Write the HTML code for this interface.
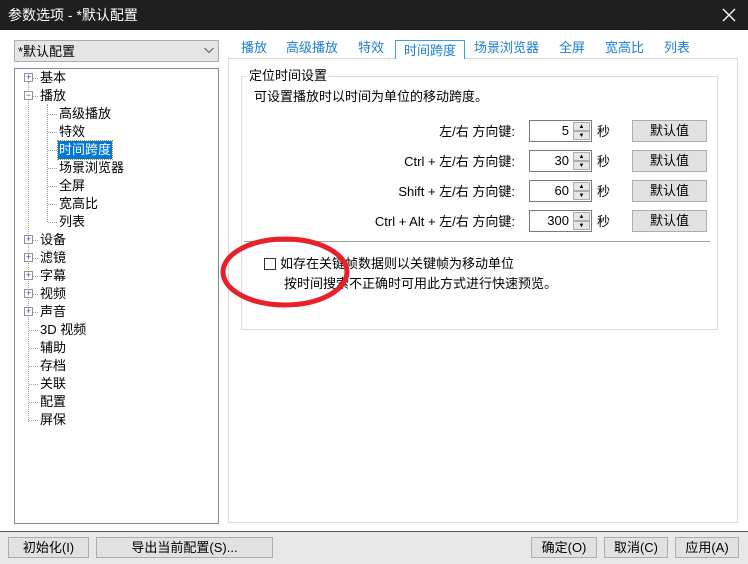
<!DOCTYPE html>
<html><head><meta charset="utf-8"><style>
*{margin:0;padding:0;box-sizing:border-box}
body{width:748px;height:564px;background:#fff;font-family:"Liberation Sans","Microsoft YaHei","Noto Sans CJK SC",sans-serif;font-size:13px;color:#000;position:relative;overflow:hidden}
.a{position:absolute;white-space:nowrap}
.title{left:0;top:0;width:748px;height:30px;background:#1f1f1f;color:#fff;font-size:14px;line-height:30px;padding-left:8px}
.tl{line-height:18px;height:18px}
.pm{position:absolute;width:9px;height:9px;border:1px solid #929292;background:#fff;font-size:9px;line-height:7px;text-align:center;color:#2a4ea3}
.tab{top:38px;height:20px;line-height:20px;color:#1a7fd6;font-size:13px}
.spin{width:63px;height:22px;border:1px solid #7a7a7a;background:#fff}
.spin span{position:absolute;right:22px;top:2px}
.arr{position:absolute;right:1px;width:17px;height:9px;border:1px solid #adadad;background:#e6e6e6;font-size:6px;line-height:8px;text-align:center}
.btn{width:75px;height:22px;border:1px solid #adadad;background:#e1e1e1;text-align:center;line-height:20px}
.bb{height:21px;border:1px solid #adadad;background:#e1e1e1;text-align:center;line-height:19px;top:537px}
</style></head><body>
<div class="a title">参数选项 - *默认配置</div>
<svg class="a" style="left:722px;top:8px" width="14" height="14"><path d="M1 1L13 13M13 1L1 13" stroke="#fff" stroke-width="1.3"/></svg>

<div class="a" style="left:14px;top:40px;width:205px;height:22px;background:#e5e5e5;border:1px solid #adadad;line-height:21px;padding-left:3px">*默认配置</div>
<svg class="a" style="left:204px;top:47px" width="10" height="7"><path d="M0.5 1L5 5.5L9.5 1" fill="none" stroke="#555" stroke-width="1"/></svg>

<div class="a" style="left:14px;top:68px;width:205px;height:456px;border:1px solid #828790;background:#fff"></div>
<div class="a" style="left:28px;top:82px;height:340px;border-left:1px dotted #a0a0a0"></div>
<div class="a" style="left:47px;top:104px;height:118px;border-left:1px dotted #a0a0a0"></div>
<div id="tree"></div>
<script>
var items=[["基本",0,"+"],["播放",0,"−"],["高级播放",1],["特效",1],["时间跨度",1,"sel"],["场景浏览器",1],["全屏",1],["宽高比",1],["列表",1],["设备",0,"+"],["滤镜",0,"+"],["字幕",0,"+"],["视频",0,"+"],["声音",0,"+"],["3D 视频",0],["辅助",0],["存档",0],["关联",0],["配置",0],["屏保",0]];
var h="";items.forEach(function(it,i){var y=69+i*18;var x=it[1]?59:40;var lx=it[1]?48:29;
h+='<div class="a" style="left:'+lx+'px;top:'+(y+9)+'px;width:'+(x-lx-2)+'px;border-top:1px dotted #a0a0a0"></div>';
if(it[2]=="+"||it[2]=="−")h+='<div class="pm" style="left:24px;top:'+(y+4)+'px">'+it[2]+'</div>';
var st=it[2]=="sel"?"background:#0078d7;color:#fff;outline:1px dotted #c80;padding:0 1px;left:"+(x-1)+"px":"left:"+x+"px";
h+='<div class="a tl" style="top:'+y+'px;'+st+'">'+it[0]+'</div>';});
document.getElementById("tree").innerHTML=h;
</script>

<div class="a" style="left:228px;top:58px;width:510px;height:465px;border:1px solid #d9d9d9;background:#fff"></div>
<div class="a tab" style="left:241px">播放</div>
<div class="a tab" style="left:286px">高级播放</div>
<div class="a tab" style="left:358px">特效</div>
<div class="a" style="left:395px;top:40px;width:70px;height:19px;border:1px solid #3c9ee6;border-bottom:none;background:#fff;color:#1a7fd6;line-height:19px;text-align:center">时间跨度</div>
<div class="a tab" style="left:474px">场景浏览器</div>
<div class="a tab" style="left:559px">全屏</div>
<div class="a tab" style="left:605px">宽高比</div>
<div class="a tab" style="left:664px">列表</div>

<div class="a" style="left:241px;top:76px;width:477px;height:254px;border:1px solid #dcdcdc"></div>
<div class="a" style="left:247px;top:67px;background:#fff;padding:0 2px;line-height:18px">定位时间设置</div>
<div class="a" style="left:254px;top:88px;line-height:18px">可设置播放时以时间为单位的移动跨度。</div>

<div id="rows"></div>
<script>
var L=["左/右 方向键:","Ctrl + 左/右 方向键:","Shift + 左/右 方向键:","Ctrl + Alt + 左/右 方向键:"],V=["5","30","60","300"],r="";
for(var i=0;i<4;i++){var y=120+i*30;
r+='<div class="a" style="right:233px;top:'+(y+1)+'px">'+L[i]+'</div>';
r+='<div class="a spin" style="left:529px;top:'+y+'px"><span>'+V[i]+'</span><div class="arr" style="top:1px">▲</div><div class="arr" style="top:10px">▼</div></div>';
r+='<div class="a" style="left:597px;top:'+(y+1)+'px">秒</div>';
r+='<div class="a btn" style="left:632px;top:'+y+'px">默认值</div>';}
document.getElementById("rows").innerHTML=r;
</script>
<div class="a" style="left:244px;top:241px;width:466px;border-top:1px solid #a0a0a0"></div>
<div class="a" style="left:264px;top:258px;width:12px;height:12px;border:1px solid #333;background:#fff"></div>
<div class="a" style="left:280px;top:255px;line-height:18px">如存在关键帧数据则以关键帧为移动单位</div>
<div class="a" style="left:284px;top:275px;line-height:18px">按时间搜索不正确时可用此方式进行快速预览。</div>
<svg class="a" style="left:0;top:0" width="748" height="564"><ellipse cx="285" cy="272" rx="62" ry="33" fill="none" stroke="#e8202a" stroke-width="5"/></svg>

<div class="a" style="left:0;top:531px;width:748px;height:33px;background:#e8e8e8;border-top:1px solid #555"></div>
<div class="a bb" style="left:8px;width:81px">初始化(I)</div>
<div class="a bb" style="left:96px;width:177px">导出当前配置(S)...</div>
<div class="a bb" style="left:531px;width:66px">确定(O)</div>
<div class="a bb" style="left:604px;width:64px">取消(C)</div>
<div class="a bb" style="left:675px;width:64px">应用(A)</div>
</body></html>
